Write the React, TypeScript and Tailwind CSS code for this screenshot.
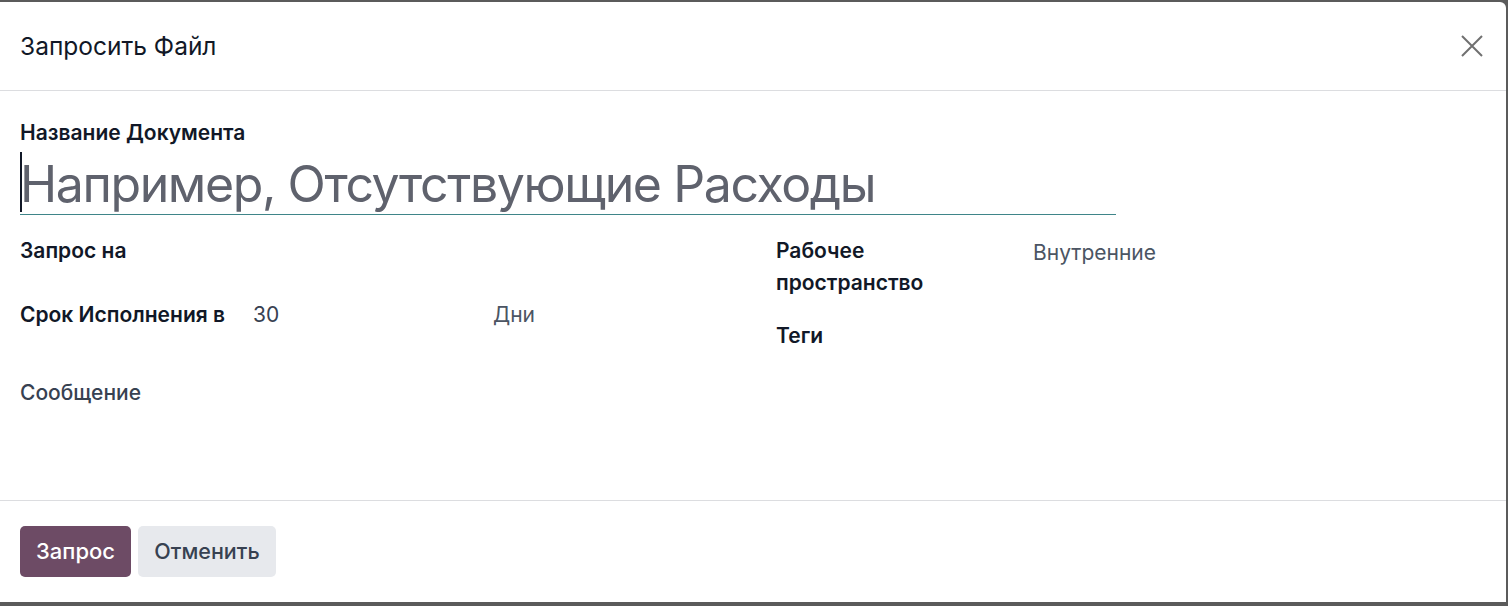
export default function App() {
  return (
    <div
      className="w-[1508px] h-[606px] bg-[#5b5b5b] pt-[2px] pr-[2px] overflow-hidden"
      style={{ fontFamily: "Inter, 'Noto Sans', sans-serif" }}
    >
      <div className="w-[1506px] h-[600px] bg-white rounded-tr-md flex flex-col">
        {/* Header */}
        <div className="h-[89px] flex items-center justify-between pl-5 pr-[22px] border-b border-[#dcdde0]">
          <h4 className="text-[24.5px] text-[#111827]">Запросить Файл</h4>
          <button className="w-6 h-6 flex items-center justify-center text-[#707070]">
            <svg width="22" height="22" viewBox="0 0 22 22" fill="none" stroke="currentColor" strokeWidth="2">
              <path d="M1 1 L21 21 M21 1 L1 21" />
            </svg>
          </button>
        </div>

        {/* Body */}
        <div className="h-[409px] px-5 pt-[31px]">
          <div className="text-[21px] font-semibold text-[#111827] leading-[22px]">Название Документа</div>
          <div className="w-[1096px] h-[71px] border-b border-[#3f8589] flex items-start">
            <span className="w-[2px] h-[60px] mt-2 bg-[#111827] mr-[-2px]" />
            <span className="text-[50px] tracking-[-1.4px] text-[#5f626d] leading-[50px] mt-[15px]">
              Например, Отсутствующие Расходы
            </span>
          </div>

          <div className="grid grid-cols-[736px_1fr] gap-5 mt-[20px] text-[21px]">
            {/* Left group */}
            <div className="flex flex-col">
              <div className="h-8 flex items-center font-semibold text-[#111827]">Запрос на</div>
              <div className="h-8 mt-8 flex items-center">
                <span className="w-[233px] font-semibold text-[#111827]">Срок Исполнения в</span>
                <span className="w-[240px] text-[#374151]">30</span>
                <span className="text-[#4b5563]">Дни</span>
              </div>
              <div className="h-8 mt-[46px] flex items-center font-medium text-[#374151]">Сообщение</div>
            </div>

            {/* Right group */}
            <div className="flex flex-col">
              <div className="flex">
                <span className="w-[257px] font-semibold text-[#111827] leading-8">Рабочее<br />пространство</span>
                <span className="text-[#4b5563] leading-8 pt-[2px]">Внутренние</span>
              </div>
              <div className="h-8 mt-[21px] flex items-center font-semibold text-[#111827]">Теги</div>
            </div>
          </div>
        </div>

        {/* Footer */}
        <div className="flex-1 border-t border-[#dcdde0] px-5 pt-[25px] flex gap-[7px] items-start">
          <button className="h-[51px] w-[111px] rounded-[5px] bg-[#6d4b65] text-white text-[22px] font-medium">Запрос</button>
          <button className="h-[51px] w-[138px] rounded-[5px] bg-[#e7e9ed] text-[#374151] text-[21.5px] font-medium">Отменить</button>
        </div>
      </div>
    </div>
  );
}
